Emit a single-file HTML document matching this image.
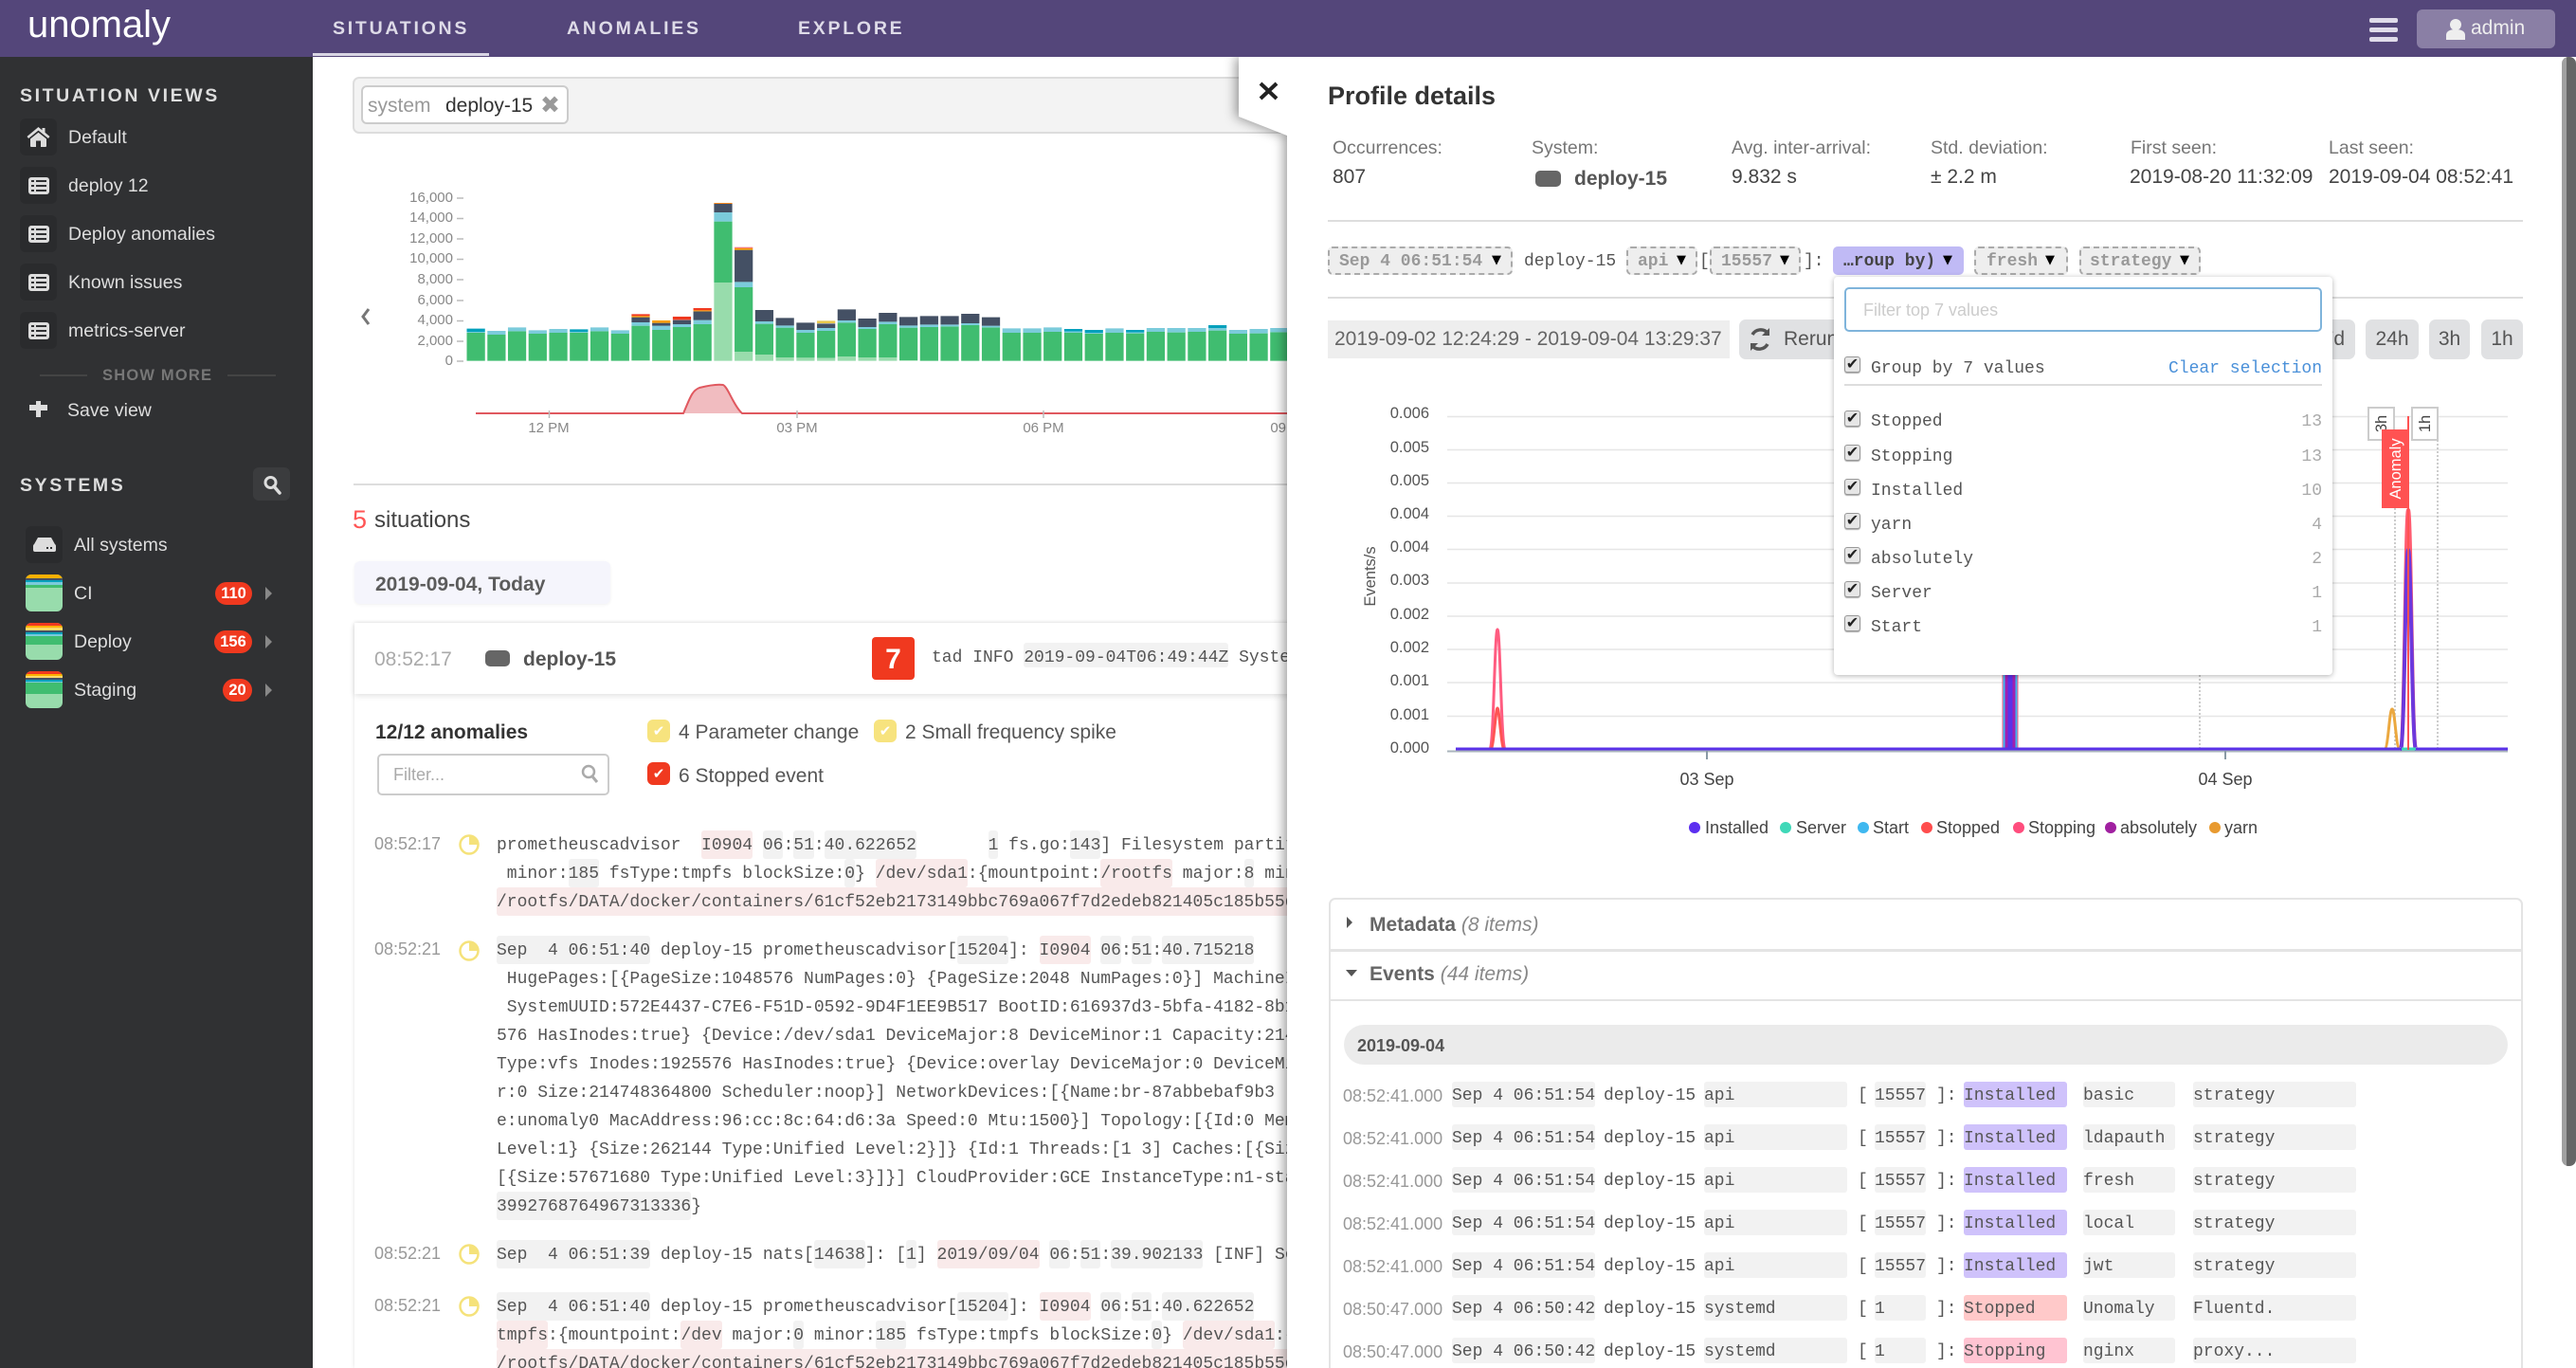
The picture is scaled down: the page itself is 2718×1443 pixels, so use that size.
<!DOCTYPE html>
<html style="overflow:hidden"><head><meta charset="utf-8"><title>Unomaly</title>
<style>
*{box-sizing:border-box}
html,body{margin:0;padding:0;width:2718px;height:1443px}
body{position:relative;overflow:hidden;background:#fff;font-family:"Liberation Sans",sans-serif;color:#555}
#root{position:absolute;left:0;top:0;width:2718px;height:1443px;overflow:hidden}
.t{position:absolute;white-space:pre;line-height:30px;height:30px}
.m{font-family:"Liberation Mono",monospace;font-size:18px;line-height:33px}
.b{position:absolute}
svg{position:absolute;left:0;top:0}
#hdr{position:absolute;left:0;top:0;width:2718px;height:60px;background:#54467a;z-index:5}
#side{position:absolute;left:0;top:60px;width:330px;height:1383px;background:#303133}
.tab{font-size:19.5px;font-weight:bold;letter-spacing:2.75px;color:#dedbe8;top:15px}
.sh{font-size:19.5px;font-weight:bold;letter-spacing:2.6px;color:#ddd}
.ib{position:absolute;left:21px;width:39px;height:39px;background:#2a2b2d;border-radius:6px}
.si{font-size:19.5px;color:#ddd;left:72px}
.li{position:absolute;left:30px;width:22px;height:18px;background:#ddd;border-radius:3px}
.li:before{content:"";position:absolute;left:3px;top:3px;width:3px;height:12px;background:repeating-linear-gradient(#303133 0 2px,transparent 2px 5px)}
.li:after{content:"";position:absolute;left:8px;top:3px;width:11px;height:12px;background:repeating-linear-gradient(#303133 0 2px,transparent 2px 5px)}
.sys{position:absolute;left:27px;width:39px;height:39px;border-radius:6px;overflow:hidden;background:#98dcac}
.sys i{position:absolute;left:0;width:39px;display:block}
.bd{position:absolute;height:24px;background:#f0391f;border-radius:12px;color:#fff;font-weight:bold;font-size:16.5px;line-height:24px;text-align:center}
.tri{position:absolute;left:280px;width:0;height:0;border-left:7px solid #888;border-top:7px solid transparent;border-bottom:7px solid transparent}
.yl{font-size:15px;color:#888;text-align:right;width:60px;left:418px}
.xl{font-size:15px;color:#888;text-align:center;width:60px}
em{font-style:normal;background:#f2f2f2;display:inline-block;line-height:33px;height:30px;border-radius:3px}
mark{color:inherit;background:#f9eaea;display:inline-block;line-height:33px;height:30px;border-radius:3px}
.lg{left:524px;color:#555}
.lt{left:395px;font-size:18px;color:#999}
.chk{position:absolute;width:24px;height:24px;border-radius:6px;color:#fff;font:15px/24px "DejaVu Sans",sans-serif;text-align:center}
.lb{font-size:21px;color:#555}
#pbg{position:absolute;left:0;top:0;width:2718px;height:1443px;filter:drop-shadow(-3px 0 6px rgba(0,0,0,.4))}
#pbg div{position:absolute;left:1307px;top:60px;width:1411px;height:1383px;background:#fff;clip-path:polygon(0 0,100% 0,100% 100%,51px 100%,51px 83px,0 63px)}
.sl{font-size:19.5px;color:#777;top:141px}
.sv{font-size:21px;color:#444;top:172px}
.pl{position:absolute;top:260px;height:30px;background:#eee;border:2px dashed #aaa;border-radius:5px}
.pt{top:260px;font-weight:bold;color:#999}
.ar{position:absolute;top:260px;font:13px/30px "DejaVu Sans",sans-serif;color:#000}
.tb{position:absolute;top:337px;height:42px;background:#e0e1e3;border-radius:7px;font-size:21px;line-height:42px;color:#555;text-align:center}
.cl{font-size:16.5px;color:#555;text-align:right;width:60px;left:1448px}
.lgd{font-size:18px;color:#444;top:858px}
.cb{position:absolute;left:1946px;width:17px;height:17px;background:#e6e6e6;border:1.5px solid #999;border-radius:3px;box-shadow:0 1px 1px #aaa;color:#222;font:16px/13px "DejaVu Sans",sans-serif;text-align:center}
.di{left:1974px;color:#555}
.dn{right:268px;color:#aaa}
.ev{position:absolute;left:0;width:0;height:27px;font-family:"Liberation Mono",monospace;font-size:18px;color:#555}
.ev span{position:absolute;top:0;height:27px;line-height:31px;white-space:pre;border-radius:3px}
.g{background:#f2f2f2}
.c0{left:1417px;font-family:"Liberation Sans",sans-serif;color:#999}
.c1{left:1532px;width:151px}
.c2{left:1692px}
.c3{left:1798px;width:151px}
.c4{left:1960px}
.c5{left:1978px;width:54px}
.c6{left:2043px}
.c7{left:2072px;width:109px}
.c8{left:2198px;width:97px}
.c9{left:2314px;width:172px}
.ins{background:#cfc2fb}.sto{background:#ffc9c9}.stp{background:#ffc4d2}
</style></head>
<body>
<div id="root">
<svg width="0" height="0" style="position:absolute"><defs>
<g id="pie"><circle cx="0" cy="0" r="9.5" fill="#fff" stroke="#f5e27a" stroke-width="2.5"/><path d="M0 0V-9.5A9.5 9.5 0 0 1 9.5 0Z" fill="#f5e27a"/></g>
</defs></svg>

<!-- header -->
<div id="hdr">
<svg width="200" height="60"><text x="29" y="39" font-family="Liberation Sans" font-size="40" fill="#fff" textLength="151" lengthAdjust="spacing">unomaly</text></svg>
<div class="t tab" style="left:351px">SITUATIONS</div>
<div class="t tab" style="left:598px">ANOMALIES</div>
<div class="t tab" style="left:842px">EXPLORE</div>
<div class="b" style="left:330px;top:56px;width:186px;height:3px;background:#d9d6e4"></div>
<div class="b" style="left:2500px;top:19px;width:30px;height:5px;background:#e0dcea;border-radius:2px"></div>
<div class="b" style="left:2500px;top:29px;width:30px;height:5px;background:#e0dcea;border-radius:2px"></div>
<div class="b" style="left:2500px;top:39px;width:30px;height:5px;background:#e0dcea;border-radius:2px"></div>
<div class="b" style="left:2550px;top:10px;width:146px;height:41px;background:#8a7fa5;border-radius:6px"></div>
<svg width="2718" height="60"><circle cx="2591" cy="26" r="6" fill="#eee"/><path d="M2581 42V37C2581 33 2585 31 2591 31S2601 33 2601 37V42Z" fill="#eee"/></svg>
<div class="t" style="left:2607px;top:15px;font-size:21px;color:#eee">admin</div>
</div>

<!-- sidebar -->
<div id="side"></div>
<div class="t sh" style="left:21px;top:86px">SITUATION VIEWS</div>
<div class="ib" style="top:125px"></div><div class="ib" style="top:176px"></div><div class="ib" style="top:227px"></div><div class="ib" style="top:278px"></div><div class="ib" style="top:329px"></div>
<svg width="330" height="800"><path transform="translate(28.5,133)" d="M12 1L0 11l1.6 2L12 4.6 22.4 13 24 11l-5-4.2V2h-3v2.4zM3.5 13.5V21a1 1 0 0 0 1 1h5v-6.5h5V22h5a1 1 0 0 0 1-1v-7.500L12 6.800z" fill="#ddd"/>
<path d="M31 434v-6h7v-4h5v4h7v6h-7v7h-5v-7z" fill="#ddd" transform="translate(0,-1)"/></svg>
<div class="li" style="top:187px"></div><div class="li" style="top:238px"></div><div class="li" style="top:289px"></div><div class="li" style="top:340px"></div>
<div class="t si" style="top:130px">Default</div>
<div class="t si" style="top:181px">deploy 12</div>
<div class="t si" style="top:232px">Deploy anomalies</div>
<div class="t si" style="top:283px">Known issues</div>
<div class="t si" style="top:334px">metrics-server</div>
<div class="b" style="left:42px;top:395px;width:50px;height:2px;background:#444"></div>
<div class="t" style="left:108px;top:381px;font-size:16.5px;font-weight:bold;letter-spacing:1.2px;color:#777">SHOW MORE</div>
<div class="b" style="left:240px;top:395px;width:51px;height:2px;background:#444"></div>
<div class="t si" style="left:71px;top:418px">Save view</div>

<div class="t sh" style="left:21px;top:497px">SYSTEMS</div>
<div class="b" style="left:267px;top:493px;width:39px;height:35px;background:#3b3c3e;border-radius:6px"></div>
<svg width="330" height="800"><circle cx="285.500" cy="509" r="5.500" fill="none" stroke="#ddd" stroke-width="3"/><path d="M289 513l6 7" stroke="#ddd" stroke-width="3.500" stroke-linecap="round"/></svg>
<div class="b" style="left:27px;top:555px;width:39px;height:39px;background:#2a2b2d;border-radius:6px"></div>
<svg width="330" height="800"><path d="M40 567h14l4.500 8h-23z" fill="#ddd"/><rect x="35" y="574" width="24" height="8" rx="2" fill="#ddd"/><rect x="49" y="577" width="2" height="2" fill="#303133"/><rect x="53" y="577" width="2" height="2" fill="#303133"/></svg>
<div class="t si" style="left:78px;top:560px">All systems</div>

<div class="sys" style="top:606px"><i style="top:0;height:4px;background:#fdb000"></i><i style="top:4px;height:2px;background:#445064"></i><i style="top:6px;height:2px;background:#00a0bc"></i><i style="top:8px;height:3px;background:#7bcbdb"></i><i style="top:11px;height:3px;background:#40bd70"></i></div>
<div class="sys" style="top:657px"><i style="top:0;height:3px;background:#f0391f"></i><i style="top:3px;height:2px;background:#fdb000"></i><i style="top:5px;height:3px;background:#fed96a"></i><i style="top:8px;height:2px;background:#445064"></i><i style="top:10px;height:2px;background:#00a0bc"></i><i style="top:12px;height:2px;background:#7bcbdb"></i><i style="top:14px;height:9px;background:#40bd70"></i></div>
<div class="sys" style="top:708px"><i style="top:0;height:3px;background:#f0391f"></i><i style="top:3px;height:2px;background:#fdb000"></i><i style="top:5px;height:2px;background:#fed96a"></i><i style="top:7px;height:2px;background:#445064"></i><i style="top:9px;height:2px;background:#00a0bc"></i><i style="top:11px;height:1px;background:#7bcbdb"></i><i style="top:12px;height:12px;background:#40bd70"></i></div>
<div class="t si" style="left:78px;top:611px">CI</div>
<div class="t si" style="left:78px;top:662px">Deploy</div>
<div class="t si" style="left:78px;top:713px">Staging</div>
<div class="bd" style="left:227px;top:614px;width:39px">110</div>
<div class="bd" style="left:226px;top:665px;width:40px">156</div>
<div class="bd" style="left:235px;top:716px;width:31px">20</div>
<div class="tri" style="top:619px"></div><div class="tri" style="top:670px"></div><div class="tri" style="top:721px"></div>

<!-- main -->
<div class="b" style="left:372px;top:81px;width:1000px;height:60px;background:#f3f3f3;border:2px solid #ddd;border-radius:7px"></div>
<div class="b" style="left:381px;top:90px;width:219px;height:41px;background:#fff;border:2px solid #ccc;border-radius:6px"></div>
<div class="t" style="left:388px;top:97px;font-size:21px;color:#999">system</div>
<div class="t" style="left:470px;top:97px;font-size:21px;color:#333">deploy-15</div>
<div class="t" style="left:570px;top:96px;font:25px/30px 'DejaVu Sans',sans-serif;color:#999">✖</div>

<div class="t yl" style="top:194px">16,000</div><div class="t yl" style="top:215px">14,000</div><div class="t yl" style="top:237px">12,000</div><div class="t yl" style="top:258px">10,000</div><div class="t yl" style="top:280px">8,000</div><div class="t yl" style="top:302px">6,000</div><div class="t yl" style="top:323px">4,000</div><div class="t yl" style="top:345px">2,000</div><div class="t yl" style="top:366px">0</div>
<svg width="1400" height="520">
<path d="M482 209h7M482 230.500h7M482 252h7M482 273.500h7M482 295h7M482 317h7M482 338.500h7M482 360h7M482 381h7" stroke="#bbb" stroke-width="1.500"/>
<path d="M389 326l-6 8 6 8" fill="none" stroke="#777" stroke-width="3"/>
<g transform="translate(340,60) scale(.6631,.33333)" stroke-width="29" fill="none">
<path stroke="#40bd70" d="M244.500 873V962M277.300 879V962M310 868V962M342.800 876V962M375.600 873V962M408.400 873V962M441.200 868V962M474 876V962M506.700 851V960M539.500 864V962M572.300 855V962M605 846V962M637.900 521V714M670.600 729V933M703.400 845V942M736.200 857V951M769 873V952M801.800 867V953M834.500 841V948M867.300 861V951M900.100 846V951M932.900 857V960M965.700 855V962M998.400 853V962M1031.200 849V962M1064 856V962M1096.800 873V962M1129.600 873V962M1162.300 870V962M1195.100 873V962M1227.900 876V962M1260.700 873V962M1293.500 875V962M1326.200 870V962M1359 872V962M1391.800 870V962M1424.600 866V962M1457.400 876V962M1490.100 875V962M1522.900 871V962"/>
<path stroke="#98dcac" d="M506.700 960V962M637.900 714V962M670.600 933V962M703.400 942V962M736.200 951V962M769 952V962M801.800 953V962M834.500 948V962M867.300 951V962M900.100 951V962M932.900 960V962"/>
<path stroke="#7bcbdb" d="M244.500 870V873M277.300 867V879M310 856V868M342.800 865V876M375.600 861V873M408.400 870V873M441.200 856V868M474 865V876M506.700 840V851M539.500 851V864M572.300 846V855M605 833V846M637.900 492V521M670.600 712V729M703.400 837V845M736.200 850V857M769 864V873M801.800 858V867M834.500 834V841M867.300 855V861M900.100 838V846M932.900 850V857M965.700 847V855M998.400 847V853M1031.200 843V849M1064 851V856M1096.800 859V873M1129.600 859V873M1162.300 856V870M1195.100 869V873M1227.900 873V876M1260.700 859V873M1293.500 872V875M1326.200 858V870M1359 858V872M1391.800 858V870M1424.600 858V866M1457.400 864V876M1490.100 861V875M1522.900 858V871"/>
<path stroke="#00a0bc" d="M244.500 860V870M408.400 862V870M1195.100 861V869M1227.900 864V873M1293.500 864V872M1424.600 849V858"/>
<path stroke="#445064" d="M506.700 824V840M539.500 842V851M572.300 833V846M605 805V833M637.900 465V492M670.600 611V712M703.400 801V837M736.200 826V850M769 841V864M801.800 844V858M834.500 799V834M867.300 828V855M900.100 810V838M932.900 823V850M965.700 820V847M998.400 820V847M1031.200 813V843M1064 824V851"/>
<path stroke="#f0391f" d="M506.700 814V820M572.300 822V832M605 795V802M637.900 462V463M670.600 604V606"/>
<path stroke="#fa9f00" d="M539.500 834V842M605 802V805M637.900 463V465M670.600 606V611M506.700 820V824"/>
<path stroke="#e8c84d" d="M801.800 835V843"/>
<path stroke="#f7b9c0" d="M670.600 601V604"/>
</g>
<path d="M721 436C728 420 730 412 738 409C746 407 756 405 763 406C768 408 774 428 783 436Z" fill="#f1bcc0"/>
<path d="M502 436H721C728 420 730 412 738 409C746 407 756 405 763 406C768 408 774 428 783 436H1360" fill="none" stroke="#e0585f" stroke-width="2"/>
<path d="M579.500 433v8M841 433v8M1101 433v8M1362 433v8" stroke="#bbb" stroke-width="1.500"/>
</svg>
<div class="t xl" style="left:549px;top:437px">12 PM</div><div class="t xl" style="left:811px;top:437px">03 PM</div><div class="t xl" style="left:1071px;top:437px">06 PM</div><div class="t xl" style="left:1332px;top:437px">09 PM</div>
<div class="b" style="left:373px;top:510px;width:1000px;height:2px;background:#ddd"></div>

<div class="t" style="left:372px;top:533px;font-size:27px;color:#f55">5</div>
<div class="t" style="left:395px;top:534px;font-size:24px;color:#444">situations</div>
<div class="b" style="left:374px;top:592px;width:270px;height:45px;background:#f5f5fc;border-radius:6px;box-shadow:0 1px 3px rgba(0,0,0,.06)"></div>
<div class="t" style="left:396px;top:602px;font-size:21px;font-weight:bold;color:#5c5c5c">2019-09-04, Today</div>

<div class="b" style="left:374px;top:657px;width:1010px;height:786px;background:#fff;box-shadow:0 0 4px rgba(0,0,0,.12)"></div>
<div class="b" style="left:374px;top:657px;width:1010px;height:75px;background:#fff;box-shadow:0 2px 6px rgba(0,0,0,.12)"></div>
<div class="t" style="left:395px;top:681px;font-size:21px;color:#aaa">08:52:17</div>
<div class="b" style="left:512px;top:686px;width:26px;height:17px;background:#666;border-radius:5px"></div>
<div class="t" style="left:552px;top:681px;font-size:21px;font-weight:bold;color:#555">deploy-15</div>
<div class="b" style="left:920px;top:672px;width:45px;height:45px;background:#f0391f;border-radius:4px;color:#fff;font-weight:bold;font-size:30px;line-height:47px;text-align:center">7</div>
<div class="t m" style="left:983px;top:678px;color:#555">tad INFO <em style="height:26px">2019-09-04T06:49:44Z</em> Systemd started the service unit</div>

<div class="t" style="left:396px;top:758px;font-size:21px;font-weight:bold;color:#333">12/12 anomalies</div>
<div class="b" style="left:398px;top:795px;width:245px;height:44px;background:#fff;border:2px solid #ccc;border-radius:5px"></div>
<div class="t" style="left:415px;top:802px;font-size:18px;color:#aaa">Filter...</div>
<svg width="700" height="900"><circle cx="621" cy="814" r="6" fill="none" stroke="#aaa" stroke-width="2.500"/><path d="M625 819l5 6" stroke="#aaa" stroke-width="3"/></svg>
<div class="chk" style="left:683px;top:759px;background:#f7e37e">✔</div>
<div class="t lb" style="left:716px;top:758px">4 Parameter change</div>
<div class="chk" style="left:922px;top:759px;background:#f7e37e">✔</div>
<div class="t lb" style="left:955px;top:758px">2 Small frequency spike</div>
<div class="chk" style="left:683px;top:804px;background:#f0391f">✔</div>
<div class="t lb" style="left:716px;top:804px">6 Stopped event</div>

<div class="t lt" style="top:875px">08:52:17</div><div class="t lt" style="top:986px">08:52:21</div><div class="t lt" style="top:1307px">08:52:21</div><div class="t lt" style="top:1362px">08:52:21</div>
<svg width="700" height="1443"><use href="#pie" x="495" y="891"/><use href="#pie" x="495" y="1003"/><use href="#pie" x="495" y="1323"/><use href="#pie" x="495" y="1378"/></svg>

<div class="t m lg" style="top:876px">prometheuscadvisor  <mark>I0904</mark> <em>06</em>:<em>51</em>:<em>40.622652</em>       <em>1</em> fs.go:<em>143</em>] Filesystem partitions: map[tmpfs:{mountpoint:/dev}</div>
<div class="t m lg" style="top:906px"> minor:<em>185</em> fsType:tmpfs blockSize:<em>0</em>} <mark>/dev/sda1</mark>:{mountpoint:<mark>/rootfs</mark> major:<em>8</em> minor:1 fsType:ext4 blockSize:0}</div>
<div class="t m lg" style="top:936px"><mark>/rootfs/DATA/docker/containers/61cf52eb2173149bbc769a067f7d2edeb821405c185b55d0e</mark></div>

<div class="t m lg" style="top:987px"><em>Sep  4 06:51:40</em> deploy-15 prometheuscadvisor[<em>15204</em>]: <mark>I0904</mark> <em>06</em>:<em>51</em>:<em>40.715218</em></div>
<div class="t m lg" style="top:1017px"> HugePages:[{PageSize:1048576 NumPages:0} {PageSize:2048 NumPages:0}] MachineID:12345</div>
<div class="t m lg" style="top:1047px"> SystemUUID:572E4437-C7E6-F51D-0592-9D4F1EE9B517 BootID:616937d3-5bfa-4182-8b12-34</div>
<div class="t m lg" style="top:1077px">576 HasInodes:true} {Device:/dev/sda1 DeviceMajor:8 DeviceMinor:1 Capacity:214748</div>
<div class="t m lg" style="top:1107px">Type:vfs Inodes:1925576 HasInodes:true} {Device:overlay DeviceMajor:0 DeviceMinor:0</div>
<div class="t m lg" style="top:1137px">r:0 Size:214748364800 Scheduler:noop}] NetworkDevices:[{Name:br-87abbebaf9b3 </div>
<div class="t m lg" style="top:1167px">e:unomaly0 MacAddress:96:cc:8c:64:d6:3a Speed:0 Mtu:1500}] Topology:[{Id:0 Memory:1</div>
<div class="t m lg" style="top:1197px">Level:1} {Size:262144 Type:Unified Level:2}]} {Id:1 Threads:[1 3] Caches:[{Size:3276</div>
<div class="t m lg" style="top:1227px">[{Size:57671680 Type:Unified Level:3}]}] CloudProvider:GCE InstanceType:n1-standard</div>
<div class="t m lg" style="top:1257px"><em>3992768764967313336</em>}</div>

<div class="t m lg" style="top:1308px"><em>Sep  4 06:51:39</em> deploy-15 nats[<em>14638</em>]: [<em>1</em>] <mark>2019/09/04</mark> <em>06</em>:<em>51</em>:<em>39.902133</em> [INF] Server is ready</div>

<div class="t m lg" style="top:1363px"><em>Sep  4 06:51:40</em> deploy-15 prometheuscadvisor[<em>15204</em>]: <mark>I0904</mark> <em>06</em>:<em>51</em>:<em>40.622652</em></div>
<div class="t m lg" style="top:1393px"><mark>tmpfs</mark>:{mountpoint:<mark>/dev</mark> major:<em>0</em> minor:<em>185</em> fsType:tmpfs blockSize:<em>0</em>} <mark>/dev/sda1</mark>:{mount</div>
<div class="t m lg" style="top:1423px"><mark>/rootfs/DATA/docker/containers/61cf52eb2173149bbc769a067f7d2edeb821405c185b55d0e</mark></div>

<!-- panel -->
<div id="pbg"><div></div></div>
<svg width="2718" height="1443"><path d="M1330 88L1347 104M1347 88L1330 104" stroke="#222" stroke-width="4"/></svg>
<div class="t" style="left:1401px;top:86px;font-size:27px;font-weight:bold;color:#333">Profile details</div>
<div class="t sl" style="left:1406px">Occurrences:</div><div class="t sl" style="left:1616px">System:</div><div class="t sl" style="left:1827px">Avg. inter-arrival:</div><div class="t sl" style="left:2037px">Std. deviation:</div><div class="t sl" style="left:2248px">First seen:</div><div class="t sl" style="left:2457px">Last seen:</div>
<div class="t sv" style="left:1406px">807</div>
<div class="b" style="left:1620px;top:180px;width:27px;height:17px;background:#666;border-radius:5px"></div>
<div class="t" style="left:1661px;top:174px;font-size:21px;font-weight:bold;color:#555">deploy-15</div>
<div class="t sv" style="left:1827px">9.832 s</div><div class="t sv" style="left:2037px">± 2.2 m</div><div class="t sv" style="left:2247px">2019-08-20 11:32:09</div><div class="t sv" style="left:2457px">2019-09-04 08:52:41</div>
<div class="b" style="left:1401px;top:232px;width:1261px;height:2px;background:#ddd"></div>

<div class="pl" style="left:1401px;width:195px"></div><div class="t m pt" style="left:1413px">Sep 4 06:51:54</div><div class="ar" style="left:1574px">▼</div>
<div class="t m" style="left:1608px;top:260px">deploy-15</div>
<div class="pl" style="left:1716px;width:75px"></div><div class="t m pt" style="left:1728px">api</div><div class="ar" style="left:1769px">▼</div>
<div class="t m" style="left:1793px;top:260px">[</div>
<div class="pl" style="left:1804px;width:96px"></div><div class="t m pt" style="left:1816px">15557</div><div class="ar" style="left:1878px">▼</div>
<div class="t m" style="left:1903px;top:260px">]:</div>
<div class="b" style="left:1934px;top:260px;width:138px;height:30px;background:#c0baf5;border-radius:5px"></div><div class="t m" style="left:1945px;top:260px;font-weight:bold;color:#444">…roup by)</div><div class="ar" style="left:2050px">▼</div>
<div class="pl" style="left:2083px;width:99px"></div><div class="t m pt" style="left:2096px">fresh</div><div class="ar" style="left:2158px">▼</div>
<div class="pl" style="left:2194px;width:128px"></div><div class="t m pt" style="left:2205px">strategy</div><div class="ar" style="left:2300px">▼</div>
<div class="b" style="left:1401px;top:313px;width:1261px;height:2px;background:#ddd"></div>

<div class="b" style="left:1401px;top:338px;width:424px;height:40px;background:#eee"></div>
<div class="t" style="left:1408px;top:343px;font-size:21px;color:#666">2019-09-02 12:24:29 - 2019-09-04 13:29:37</div>
<div class="tb" style="left:1835px;width:130px;text-align:left;padding-left:47px">Rerun</div>
<svg width="2718" height="400"><path d="M1865 351a10 10 0 0 0-16 2M1849 365a10 10 0 0 0 16-2" fill="none" stroke="#555" stroke-width="3.500"/><path d="M1867 346v8h-8zM1847 370v-8h8z" fill="#555"/></svg>
<div class="tb" style="left:2440px;width:45px;text-align:right;padding-right:11px">7d</div>
<div class="tb" style="left:2496px;width:56px">24h</div>
<div class="tb" style="left:2563px;width:43px">3h</div>
<div class="tb" style="left:2618px;width:44px">1h</div>

<!-- chart -->
<div class="t cl" style="top:421px">0.006</div><div class="t cl" style="top:457px">0.005</div><div class="t cl" style="top:492px">0.005</div><div class="t cl" style="top:527px">0.004</div><div class="t cl" style="top:562px">0.004</div><div class="t cl" style="top:597px">0.003</div><div class="t cl" style="top:633px">0.002</div><div class="t cl" style="top:668px">0.002</div><div class="t cl" style="top:703px">0.001</div><div class="t cl" style="top:739px">0.001</div><div class="t cl" style="top:774px">0.000</div>
<svg width="2718" height="1443">
<path d="M1527 439.500H2646M1527 474.500H2646M1527 509.500H2646M1527 544.500H2646M1527 579.500H2646M1527 615H2646M1527 650H2646M1527 685H2646M1527 720H2646M1527 755.500H2646" stroke="#e6e6e6" stroke-width="1.500"/>
<path d="M1527 792.500H2646" stroke="#aab4bc" stroke-width="2"/>
<path d="M1801 792v9M2348 792v9" stroke="#8a9aa5" stroke-width="2"/>
<path d="M2321 440V791M2527 464V791M2572 464V791" stroke="#bbb" stroke-width="1.500" stroke-dasharray="2 2"/>
<text transform="translate(1451,608) rotate(-90)" text-anchor="middle" font-family="Liberation Sans" font-size="16.500" fill="#555">Events/s</text>
<g fill="none" stroke-width="3">
<path d="M1572 790C1576 790 1577 664 1580 664C1583 664 1584 790 1588 790" stroke="#ff5c80"/>
<path d="M1573 790C1576 790 1578 747 1580 747C1582 747 1584 790 1587 790" stroke="#ff5555"/>
<path d="M2114 790V712L2117 560H2125L2128 712V790" stroke="#ff5c80"/>
<path d="M2115 790V712L2118 560H2124L2127 712V790" stroke="#3fb8f0"/>
<path d="M2117 790V712L2119 580H2123L2125 712V790" stroke="#a020b0"/>
<path d="M2120 790V712L2120 600H2122L2122 712V790" stroke="#5a32e8"/>
<path d="M2516 790C2520 790 2521 748 2524 748C2527 748 2528 790 2532 790" stroke="#eba83f"/>
<path d="M2533 790C2537 790 2538 538 2541 538C2544 538 2545 790 2549 790" stroke="#ff5c70" stroke-width="4"/>
<path d="M2533 790C2537 790 2538 580 2541 580C2544 580 2545 790 2549 790" stroke="#6d38dc" stroke-width="4"/>
<path d="M1536 790H2646" stroke="#5a32e8" stroke-width="3"/>
<path d="M2534 790H2549" stroke="#3fd8b8" stroke-width="3"/>
</g>
<path d="M2541 439V791" stroke="#ff5252" stroke-width="2"/>
<rect x="2499" y="430" width="27" height="34" fill="#fff" stroke="#ccc" stroke-width="2"/>
<rect x="2545" y="430" width="27" height="34" fill="#fff" stroke="#ccc" stroke-width="2"/>
<text transform="translate(2518,447) rotate(-90)" text-anchor="middle" font-family="Liberation Sans" font-size="16.500" fill="#444">3h</text>
<text transform="translate(2564,447) rotate(-90)" text-anchor="middle" font-family="Liberation Sans" font-size="16.500" fill="#444">1h</text>
<rect x="2513" y="453" width="28" height="83" fill="#ff5252"/>
<text transform="translate(2533,494.500) rotate(-90)" text-anchor="middle" font-family="Liberation Sans" font-size="16.500" fill="#fff">Anomaly</text>
<circle cx="1788" cy="873" r="6" fill="#5c2ff0"/><circle cx="1884" cy="873" r="6" fill="#3fd8b8"/><circle cx="1966" cy="873" r="6" fill="#3fb8f0"/><circle cx="2033" cy="873" r="6" fill="#ff4d4d"/><circle cx="2130" cy="873" r="6" fill="#ff4d7d"/><circle cx="2227" cy="873" r="6" fill="#a020a0"/><circle cx="2337" cy="873" r="6" fill="#e89a30"/>
</svg>
<div class="t" style="left:1771px;top:807px;width:60px;text-align:center;font-size:18px;color:#444">03 Sep</div>
<div class="t" style="left:2318px;top:807px;width:60px;text-align:center;font-size:18px;color:#444">04 Sep</div>
<div class="t lgd" style="left:1799px">Installed</div><div class="t lgd" style="left:1895px">Server</div><div class="t lgd" style="left:1976px">Start</div><div class="t lgd" style="left:2043px">Stopped</div><div class="t lgd" style="left:2140px">Stopping</div><div class="t lgd" style="left:2237px">absolutely</div><div class="t lgd" style="left:2347px">yarn</div>

<!-- dropdown -->
<div class="b" style="left:1935px;top:292px;width:526px;height:420px;background:#fff;border-radius:4px;box-shadow:0 1px 6px rgba(0,0,0,.3)"></div>
<div class="b" style="left:1946px;top:303px;width:504px;height:47px;background:#fff;border:2px solid #7fb4db;border-radius:5px"></div>
<div class="t" style="left:1966px;top:312px;font-size:18px;color:#ccc">Filter top 7 values</div>
<div class="cb" style="top:376px">✔</div>
<div class="t m di" style="top:373px">Group by 7 values</div>
<div class="t m" style="right:268px;top:373px;color:#4a90d9">Clear selection</div>
<div class="b" style="left:1946px;top:405px;width:504px;height:2px;background:#ddd"></div>
<div class="cb" style="top:433px">✔</div><div class="t m di" style="top:429px">Stopped</div><div class="t m dn" style="top:429px">13</div>
<div class="cb" style="top:469px">✔</div><div class="t m di" style="top:466px">Stopping</div><div class="t m dn" style="top:466px">13</div>
<div class="cb" style="top:505px">✔</div><div class="t m di" style="top:502px">Installed</div><div class="t m dn" style="top:502px">10</div>
<div class="cb" style="top:541px">✔</div><div class="t m di" style="top:538px">yarn</div><div class="t m dn" style="top:538px">4</div>
<div class="cb" style="top:577px">✔</div><div class="t m di" style="top:574px">absolutely</div><div class="t m dn" style="top:574px">2</div>
<div class="cb" style="top:613px">✔</div><div class="t m di" style="top:610px">Server</div><div class="t m dn" style="top:610px">1</div>
<div class="cb" style="top:649px">✔</div><div class="t m di" style="top:646px">Start</div><div class="t m dn" style="top:646px">1</div>

<!-- metadata -->
<div class="b" style="left:1402px;top:947px;width:1260px;height:56px;border:2px solid #e4e4e4;border-radius:7px 7px 0 0"></div>
<div class="b" style="left:1402px;top:1002px;width:1260px;height:441px;border:2px solid #e4e4e4;border-bottom:0"></div>
<div class="b" style="left:1402px;top:1054px;width:1260px;height:2px;background:#e4e4e4"></div>
<div class="b" style="left:1421px;top:967px;width:0;height:0;border-left:6px solid #555;border-top:6px solid transparent;border-bottom:6px solid transparent"></div>
<div class="t" style="left:1445px;top:961px;font-size:21px;color:#666"><b>Metadata</b> <i style="color:#888">(8 items)</i></div>
<div class="b" style="left:1420px;top:1023px;width:0;height:0;border-top:7px solid #555;border-left:6px solid transparent;border-right:6px solid transparent"></div>
<div class="t" style="left:1445px;top:1013px;font-size:21px;color:#666"><b>Events</b> <i style="color:#888">(44 items)</i></div>
<div class="b" style="left:1418px;top:1081px;width:1228px;height:42px;background:#ebebeb;border-radius:21px"></div>
<div class="t" style="left:1432px;top:1088px;font-size:18px;font-weight:bold;color:#555">2019-09-04</div>

<div class="ev" style="top:1141px"><span class="c0">08:52:41.000</span><span class="c1 g">Sep 4 06:51:54</span><span class="c2">deploy-15</span><span class="c3 g">api</span><span class="c4">[</span><span class="c5 g">15557</span><span class="c6">]:</span><span class="c7 ins">Installed</span><span class="c8 g">basic</span><span class="c9 g">strategy</span></div>
<div class="ev" style="top:1186px"><span class="c0">08:52:41.000</span><span class="c1 g">Sep 4 06:51:54</span><span class="c2">deploy-15</span><span class="c3 g">api</span><span class="c4">[</span><span class="c5 g">15557</span><span class="c6">]:</span><span class="c7 ins">Installed</span><span class="c8 g">ldapauth</span><span class="c9 g">strategy</span></div>
<div class="ev" style="top:1231px"><span class="c0">08:52:41.000</span><span class="c1 g">Sep 4 06:51:54</span><span class="c2">deploy-15</span><span class="c3 g">api</span><span class="c4">[</span><span class="c5 g">15557</span><span class="c6">]:</span><span class="c7 ins">Installed</span><span class="c8 g">fresh</span><span class="c9 g">strategy</span></div>
<div class="ev" style="top:1276px"><span class="c0">08:52:41.000</span><span class="c1 g">Sep 4 06:51:54</span><span class="c2">deploy-15</span><span class="c3 g">api</span><span class="c4">[</span><span class="c5 g">15557</span><span class="c6">]:</span><span class="c7 ins">Installed</span><span class="c8 g">local</span><span class="c9 g">strategy</span></div>
<div class="ev" style="top:1321px"><span class="c0">08:52:41.000</span><span class="c1 g">Sep 4 06:51:54</span><span class="c2">deploy-15</span><span class="c3 g">api</span><span class="c4">[</span><span class="c5 g">15557</span><span class="c6">]:</span><span class="c7 ins">Installed</span><span class="c8 g">jwt</span><span class="c9 g">strategy</span></div>
<div class="ev" style="top:1366px"><span class="c0">08:50:47.000</span><span class="c1 g">Sep 4 06:50:42</span><span class="c2">deploy-15</span><span class="c3 g">systemd</span><span class="c4">[</span><span class="c5 g">1</span><span class="c6">]:</span><span class="c7 sto">Stopped</span><span class="c8 g">Unomaly</span><span class="c9 g">Fluentd.</span></div>
<div class="ev" style="top:1411px"><span class="c0">08:50:47.000</span><span class="c1 g">Sep 4 06:50:42</span><span class="c2">deploy-15</span><span class="c3 g">systemd</span><span class="c4">[</span><span class="c5 g">1</span><span class="c6">]:</span><span class="c7 stp">Stopping</span><span class="c8 g">nginx</span><span class="c9 g">proxy...</span></div>

<!-- scrollbar -->
<div class="b" style="left:2703px;top:60px;width:15px;height:1170px;background:linear-gradient(90deg,#a0a0a0 0 5px,#666 5px);border-radius:7px"></div>
</div>
</body></html>
